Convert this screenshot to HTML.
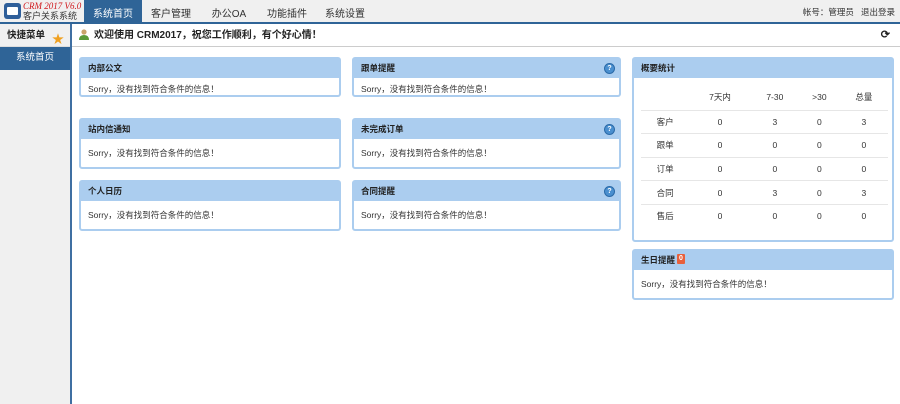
<!DOCTYPE html>
<html><head><meta charset="utf-8"><style>
*{margin:0;padding:0;box-sizing:border-box}
body{width:900px;height:404px;overflow:hidden;background:#fff;font-family:"Liberation Sans","Noto Sans CJK SC",sans-serif;font-size:9px;color:#222;position:relative}
.top{position:absolute;left:0;top:0;width:900px;background:#f0f0f0;border-bottom:2px solid #2f6497;height:24px}
.logo{position:absolute;left:4px;top:3px;width:17px;height:16px;background:#2f5f9a;border-radius:3px}
.logo i{position:absolute;left:3px;top:4px;width:11px;height:8px;background:#fff;border-radius:1px}
.lt1{position:absolute;left:23px;top:1px;font-family:"Liberation Serif",serif;font-style:italic;color:#d0171b;font-size:9px;line-height:10px}
.lt2{position:absolute;left:23px;top:11px;font-size:9px;line-height:10px;color:#333}
.nav{position:absolute;left:84px;top:0;height:22px;display:flex}
.nav div{height:22px;display:flex;align-items:center;justify-content:center;font-size:10px;color:#333;width:58px;padding-top:2px}
.nav .a{background:#2f6497;color:#fff}
.acct{position:absolute;right:5px;top:6px;font-size:8.5px;color:#333}
.side{position:absolute;left:0;top:24px;width:72px;height:380px;background:#f0f0f0;border-right:2px solid #3f6fa2}
.qk{height:23px;line-height:23px;padding-left:7px;font-size:9.5px;font-weight:bold;color:#222;border-bottom:1px solid #ddd}
.qk span{position:absolute;left:52px;top:4px;color:#f0a020;font-size:12px}
.sh{height:23px;line-height:22px;background:#2f6497;color:#fff;text-align:center;font-size:9.5px}
.wel{position:absolute;left:72px;top:24px;width:828px;height:23px;border-bottom:1px solid #ccc;line-height:23px;padding-left:22px;font-size:10px;font-weight:bold}
.wel .u{position:absolute;left:7px;top:5px;width:10px;height:11px}
.ref{position:absolute;right:10px;top:0;font-size:11px;font-weight:bold}
.p{position:absolute;border:2px solid #abcdef;border-radius:3px;background:#fff}
.p .h{background:#abcdef;height:19px;line-height:19px;padding-left:7px;font-size:8.5px;font-weight:bold;position:relative}
.p .b{padding:0 7px;font-size:8.5px;color:#333;display:flex;align-items:center}
.q{position:absolute;right:4px;top:4px;width:11px;height:11px;border-radius:50%;background:#4a8fcf;border:1px solid #2a6aa8;color:#fff;font-size:7px;line-height:9px;text-align:center;font-weight:bold}
table{border-collapse:collapse;margin:6px 7px 0;width:247px;font-size:8.5px}
td{text-align:center;height:23.6px;border-top:1px solid #e6e6e6;color:#333}
tr:first-child td{border-top:none;height:26px}
.bd{display:inline-block;background:#e8603c;color:#fff;font-size:7px;padding:0 2px;line-height:10px;border-radius:1px;margin-left:2px;position:relative;top:-3px}
</style></head><body>
<div class="top">
<div class="logo"><i></i></div>
<div class="lt1">CRM 2017 V6.0</div><div class="lt2">客户关系系统</div>
<div class="nav"><div class="a">系统首页</div><div>客户管理</div><div>办公OA</div><div>功能插件</div><div>系统设置</div></div>
<div class="acct">帐号：管理员 &nbsp; 退出登录</div>
</div>
<div class="side"><div class="qk">快捷菜单<span>★</span></div><div class="sh">系统首页</div></div>
<div class="wel"><svg class="u" viewBox="0 0 10 11"><circle cx="5" cy="3" r="2.6" fill="#c9a36a"/><path d="M0 11 Q0 6 5 6 Q10 6 10 11Z" fill="#5a9a3a"/></svg>欢迎使用 CRM2017，祝您工作顺利，有个好心情！<span class="ref">⟳</span></div>

<div class="p" style="left:79px;top:57px;width:262px;height:40px"><div class="h">内部公文</div><div class="b" style="height:17px;padding-top:5px">Sorry，没有找到符合条件的信息！</div></div>
<div class="p" style="left:79px;top:118px;width:262px;height:51px"><div class="h">站内信通知</div><div class="b" style="height:28px">Sorry，没有找到符合条件的信息！</div></div>
<div class="p" style="left:79px;top:180px;width:262px;height:51px"><div class="h">个人日历</div><div class="b" style="height:28px">Sorry，没有找到符合条件的信息！</div></div>

<div class="p" style="left:352px;top:57px;width:269px;height:40px"><div class="h">跟单提醒<span class="q">?</span></div><div class="b" style="height:17px;padding-top:5px">Sorry，没有找到符合条件的信息！</div></div>
<div class="p" style="left:352px;top:118px;width:269px;height:51px"><div class="h">未完成订单<span class="q">?</span></div><div class="b" style="height:28px">Sorry，没有找到符合条件的信息！</div></div>
<div class="p" style="left:352px;top:180px;width:269px;height:51px"><div class="h">合同提醒<span class="q">?</span></div><div class="b" style="height:28px">Sorry，没有找到符合条件的信息！</div></div>

<div class="p" style="left:632px;top:57px;width:262px;height:185px"><div class="h">概要统计</div>
<table>
<tr><td></td><td>7天内</td><td>7-30</td><td>&gt;30</td><td>总量</td></tr>
<tr><td>客户</td><td>0</td><td>3</td><td>0</td><td>3</td></tr>
<tr><td>跟单</td><td>0</td><td>0</td><td>0</td><td>0</td></tr>
<tr><td>订单</td><td>0</td><td>0</td><td>0</td><td>0</td></tr>
<tr><td>合同</td><td>0</td><td>3</td><td>0</td><td>3</td></tr>
<tr><td>售后</td><td>0</td><td>0</td><td>0</td><td>0</td></tr>
</table></div>
<div class="p" style="left:632px;top:249px;width:262px;height:51px"><div class="h">生日提醒<span class="bd">0</span></div><div class="b" style="height:28px">Sorry，没有找到符合条件的信息！</div></div>
</body></html>
